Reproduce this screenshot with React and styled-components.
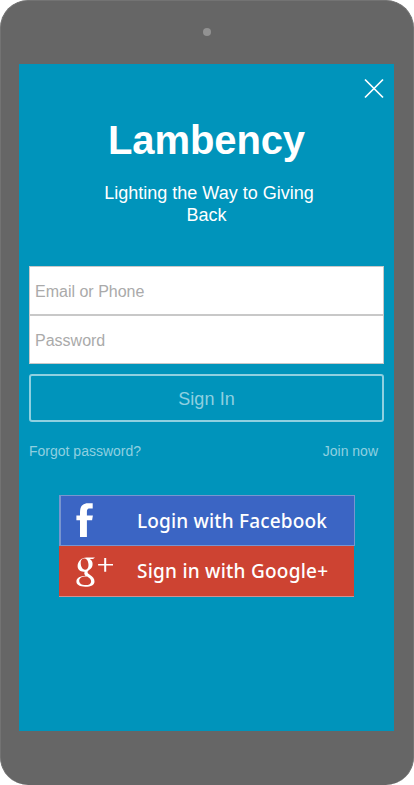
import React from "react";
import styled, { createGlobalStyle } from "styled-components";

const GlobalStyle = createGlobalStyle`
  * { box-sizing: border-box; }
  body { margin: 0; background: #fff; font-family: "Liberation Sans", Arial, sans-serif; }
`;

const Device = styled.main`
  width: 414px;
  height: 785px;
  padding: 0 19px 54px 18px;
  border: 1px solid #737373;
  border-bottom: 0;
  border-radius: 28px;
  background: #666;
  display: flex;
  flex-direction: column;
`;

const Bezel = styled.div`
  height: 63px;
  flex: none;
  display: flex;
  justify-content: center;
  padding-top: 27px;
`;

const Camera = styled.span`
  width: 8px;
  height: 8px;
  margin-left: 1px;
  border-radius: 50%;
  background: #929292;
`;

const Screen = styled.section`
  width: 375px;
  height: 667px;
  background: #0094bb;
  padding: 14px 10px 0;
  color: #fff;
`;

const TopBar = styled.header`
  display: flex;
  justify-content: flex-end;
  height: 21px;
`;

const CloseButton = styled.button`
  width: 20px;
  height: 21px;
  padding: 0;
  border: 0;
  background: none;
  color: #fff;
  svg { display: block; }
`;

const Title = styled.h1`
  margin: 18px 0 0;
  height: 46px;
  font-size: 40px;
  line-height: 46px;
  letter-spacing: -0.1px;
  text-align: center;
`;

const Tagline = styled.p`
  width: 230px;
  margin: 19px auto 0;
  font-size: 18px;
  line-height: 22px;
  text-align: center;
  text-indent: 5px;
`;

const Form = styled.form`
  margin-top: 40px;
  display: flex;
  flex-direction: column;
`;

const Field = styled.input`
  width: 355px;
  height: 49px;
  padding: 2px 5px 0;
  border: 1px solid #c8c8c8;
  border-radius: 0;
  background: #fff;
  font: 16px "Liberation Sans", Arial, sans-serif;
  outline: none;
  &::placeholder { color: #aaa; opacity: 1; }
`;

const SubmitButton = styled.button`
  height: 48px;
  margin-top: 10px;
  padding: 2px 0 0;
  border: 2px solid #8fd0e0;
  border-radius: 3px;
  background: transparent;
  color: #8fd0e0;
  font: 18px "Liberation Sans", Arial, sans-serif;
  letter-spacing: 0.1px;
`;

const Links = styled.nav`
  display: flex;
  justify-content: space-between;
  margin-top: 20px;
  padding-right: 6px;
  height: 18px;
`;

const TextLink = styled.a`
  color: #8fd0e0;
  font-size: 14px;
  line-height: 18px;
`;

const SocialList = styled.div`
  margin: 35px 0 0 30px;
  display: flex;
  flex-direction: column;
`;

const SocialButton = styled.button`
  width: ${(p) => p.$width}px;
  height: 51px;
  padding: 0;
  border: 1px solid ${(p) => p.$edge};
  border-width: ${(p) => p.$borders};
  background: ${(p) => p.$fill};
  color: #fff;
  display: flex;
  align-items: center;
  svg { display: block; flex: none; }
`;

const SocialLabel = styled.span`
  margin-left: ${(p) => p.$left}px;
  font: 500 19px/26px "Noto Sans", sans-serif;
  letter-spacing: ${(p) => p.$tracking}px;
  white-space: nowrap;
`;

const CloseIcon = () => (
  <svg width="20" height="21" viewBox="0 0 20 21" fill="none" stroke="currentColor" strokeWidth="1.7">
    <path d="M1 1.5 19 19.5M19 1.5 1 19.5" />
  </svg>
);

const FacebookIcon = () => (
  <svg width="60" height="49" viewBox="0 0 60 49" fill="currentColor">
    <path d="M19 41V24.3h-3.6v-4.8H19v-3.3C19 10 22 7.2 27 7.2h4.7v5.4h-2.8c-2.2 0-3 .9-3 3v3.9h6l-.8 4.8h-5.2V41z" />
  </svg>
);

const GooglePlusIcon = () => (
  <svg width="60" height="50" viewBox="0 0 60 50" fill="currentColor">
    <path fillRule="evenodd" d="M36 11.5l-2 1.5h-3.2c2 1.4 2.8 3 2.8 5 0 2.8-1.3 4.4-3.2 5.8-1.5 1.1-1.8 1.6-1.8 2.4 0 .9.8 1.5 2.2 2.5 3 2.1 4.7 3.8 4.7 6.7 0 3.5-3.4 5.4-9.2 5.4-5.5 0-8.9-2-8.9-5.2 0-3.7 3.9-5.6 9.2-5.8-.8-.9-1.3-1.6-1.3-2.6l.3-1.5h-1c-3.8 0-6-2.5-6-5.6 0-4.3 3.4-8.6 9-8.6zM29.5 19c0-3.8-1.8-6.5-4.4-6.5-2.2 0-3.4 1.6-3.4 4.3 0 3.7 1.7 6.9 4.3 6.9 2.2 0 3.5-1.7 3.5-4.7m-2.4 11.5c-4.2 0-6.9 1.5-6.9 4.3 0 2.6 2.5 4.3 6.3 4.3 3.6 0 5.6-1.4 5.6-3.7 0-2-1.3-3.2-3.9-4.9z" />
    <path d="M45.2 12h2v5.9H54v1.6h-6.8v6.2h-2v-6.2h-6.1v-1.6h6.1z" />
  </svg>
);

export default function App() {
  return (
    <>
      <GlobalStyle />
      <Device>
        <Bezel><Camera /></Bezel>
        <Screen>
          <TopBar>
            <CloseButton aria-label="Close"><CloseIcon /></CloseButton>
          </TopBar>
          <Title>Lambency</Title>
          <Tagline>Lighting the Way to Giving Back</Tagline>
          <Form onSubmit={(e) => e.preventDefault()}>
            <Field type="text" placeholder="Email or Phone" />
            <Field type="password" placeholder="Password" />
            <SubmitButton type="submit">Sign In</SubmitButton>
          </Form>
          <Links>
            <TextLink>Forgot password?</TextLink>
            <TextLink>Join now</TextLink>
          </Links>
          <SocialList>
            <SocialButton $width={296} $fill="#3b65c4" $edge="#7895cf" $borders="1px 1px 1px 2px">
              <FacebookIcon />
              <SocialLabel $left={16} $tracking={0.17}>Login with Facebook</SocialLabel>
            </SocialButton>
            <SocialButton $width={295} $fill="#cd4332" $edge="#d18f91" $borders="0 0 1px 0">
              <GooglePlusIcon />
              <SocialLabel $left={18} $tracking={0.24}>Sign in with Google+</SocialLabel>
            </SocialButton>
          </SocialList>
        </Screen>
      </Device>
    </>
  );
}
